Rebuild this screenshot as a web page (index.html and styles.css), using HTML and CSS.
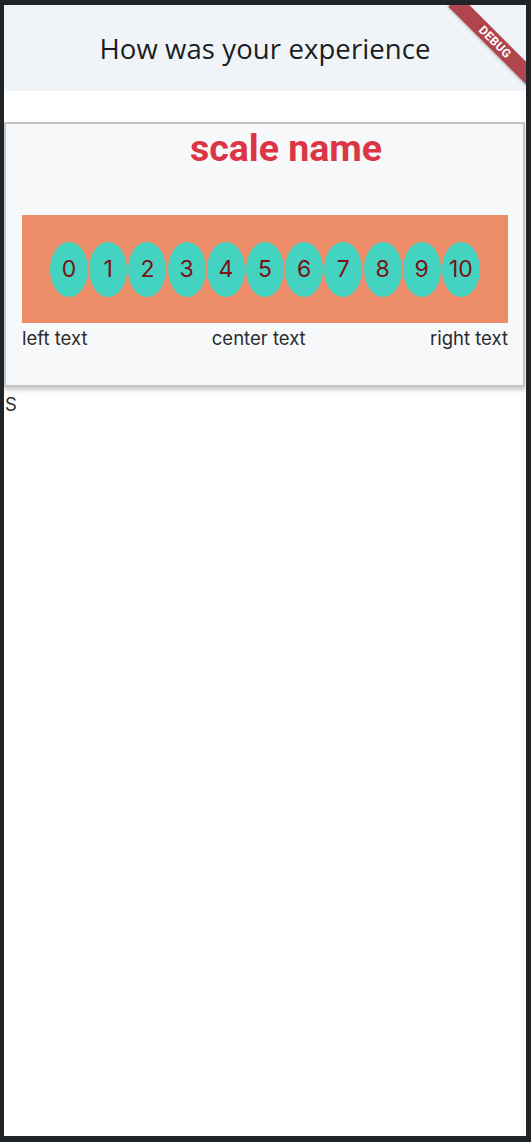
FILE: index.html
```html
<!DOCTYPE html>
<html>
<head>
<meta charset="utf-8">
<link rel="stylesheet" href="styles.css">
</head>
<body>
<div class="screen">
  <header class="appbar">
    <h1 class="appbar-title">How was your experience</h1>
  </header>
  <div class="banner"><span>DEBUG</span></div>
  <section class="card">
    <h2 class="scale-name">scale name</h2>
    <div class="scale">
      <div class="opt">0</div>
      <div class="opt">1</div>
      <div class="opt">2</div>
      <div class="opt">3</div>
      <div class="opt">4</div>
      <div class="opt">5</div>
      <div class="opt">6</div>
      <div class="opt">7</div>
      <div class="opt">8</div>
      <div class="opt">9</div>
      <div class="opt">10</div>
    </div>
    <div class="labels">
      <span>left text</span>
      <span class="center-label">center text</span>
      <span>right text</span>
    </div>
  </section>
  <p class="after">S</p>
</div>
</body>
</html>
```

FILE: styles.css
```css
html, body {
  margin: 0;
  padding: 0;
}
body {
  background: #1f2428;
  padding: 5px 5px 6px 4px;
  font-family: Inter, "Noto Sans", sans-serif;
}
.screen {
  position: relative;
  height: 1131px;
  background: #ffffff;
  overflow: hidden;
}
.appbar {
  height: 86px;
  background: #f0f4f8;
  display: flex;
  align-items: center;
  justify-content: center;
}
.appbar-title {
  margin: 0;
  font-family: "Open Sans", sans-serif;
  font-weight: 500;
  font-size: 27.5px;
  color: #1b1d20;
  letter-spacing: 0.1px;
}
.banner {
  position: absolute;
  top: 29px;
  right: -27px;
  width: 116px;
  height: 16px;
  background: #b0454d;
  transform: rotate(45deg);
  display: flex;
  align-items: center;
  justify-content: center;
  box-shadow: 0 1px 3px rgba(0,0,0,0.25);
}
.banner span {
  color: #ffffff;
  font-family: Roboto, sans-serif;
  font-weight: 700;
  font-size: 12px;
  letter-spacing: 0.3px;
}
.card {
  margin: 31px 1px 0 0;
  background: #f7f8fa;
  border: 2px solid #c4c4c4;
  box-shadow: 0 3px 4px rgba(0,0,0,0.22);
  padding: 0 15px 34px 16px;
}
.scale-name {
  margin: 0;
  padding: 4px 0 0 42px;
  text-align: center;
  font-family: Roboto, sans-serif;
  font-weight: 700;
  font-size: 37.5px;
  line-height: 40px;
  color: #dc3545;
}
.scale {
  margin-top: 47px;
  height: 108px;
  background: #ed8c69;
  display: flex;
  align-items: center;
  justify-content: center;
  gap: 1.2px;
}
.opt {
  width: 38px;
  height: 55px;
  border-radius: 50%;
  background: #44d3c0;
  display: flex;
  align-items: center;
  justify-content: center;
  font-size: 23px;
  color: #7a1114;
}
.labels {
  display: flex;
  justify-content: space-between;
  margin-top: 2px;
  font-size: 18.5px;
  line-height: 26px;
  color: #2b2b2d;
}
.center-label {
  margin-right: 0;
}
.after {
  margin: 6px 0 0 1px;
  font-size: 18.5px;
  color: #2b2b2d;
}
```
